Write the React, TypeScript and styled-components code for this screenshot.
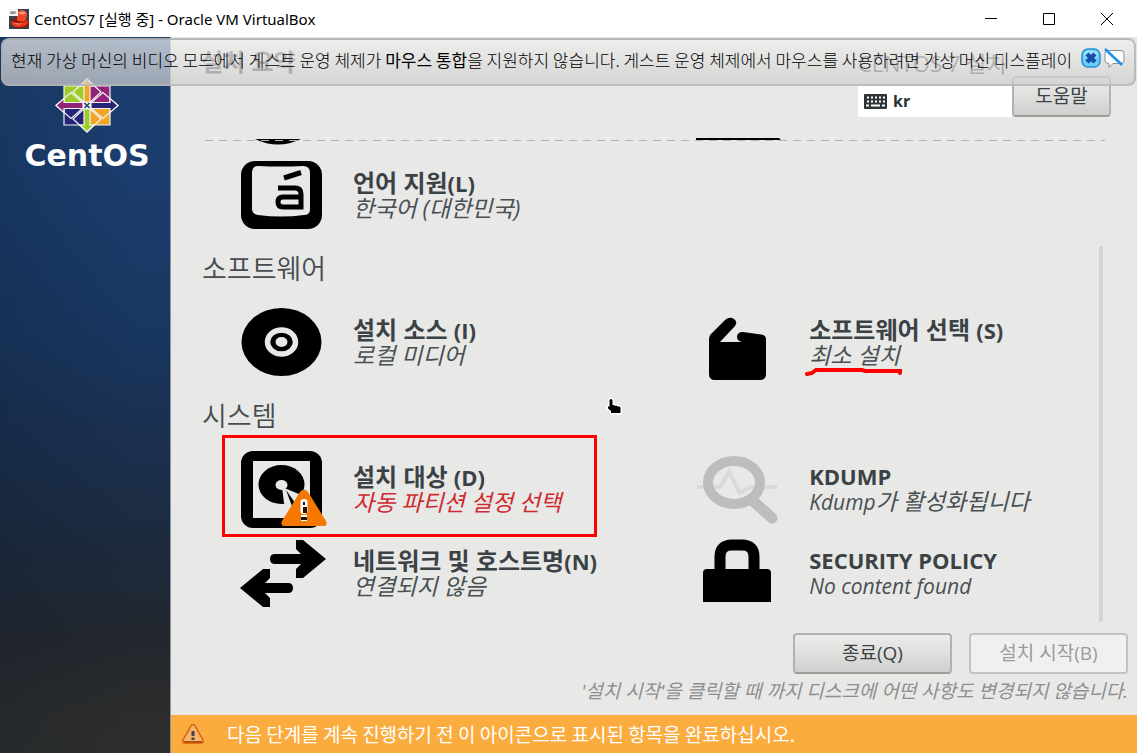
import React from "react";
import styled, { createGlobalStyle } from "styled-components";

const sans = `"Open Sans", "Noto Sans CJK KR", sans-serif`;
const ink = "#3b4245";

const GlobalStyle = createGlobalStyle`
  * { box-sizing: border-box; }
  body { margin: 0; font-family: ${sans}; background: #e8e8e6; color: ${ink}; }
  button { font: inherit; color: inherit; padding: 0; margin: 0; }
  svg { display: block; flex: none; }
`;

const Window = styled.div`
  display: flex;
  flex-direction: column;
  min-height: 100vh;
`;

const TitleBar = styled.header`
  display: flex;
  align-items: center;
  height: 37px;
  padding: 0 1px 0 9px;
  background: #fff;
  color: #000;
`;

const WindowTitle = styled.h1`
  flex: 1;
  margin: 0 0 0 5px;
  font-family: "Noto Sans", "Noto Sans CJK KR", sans-serif;
  font-size: 15px;
  font-weight: 400;
  line-height: 24px;
  white-space: nowrap;
`;

const WindowButton = styled.button`
  display: grid;
  place-items: center;
  width: 58px;
  height: 36px;
  border: 0;
  background: none;
`;

const Screen = styled.div`
  position: relative;
  flex: 1;
  display: grid;
  grid-template-columns: 171px minmax(0, 1fr);
`;

const Message = styled.div`
  position: absolute;
  z-index: 2;
  top: 1px;
  left: 1px;
  right: 1px;
  display: flex;
  align-items: flex-start;
  height: 48px;
  padding: 6px 9px 0 8px;
  border: 2px solid rgba(172, 172, 172, 0.75);
  border-radius: 8px;
  background: linear-gradient(rgba(238, 238, 238, 0.72), rgba(206, 206, 206, 0.72));
`;

const MessageText = styled.p`
  flex: 1;
  margin: 0;
  overflow: hidden;
  color: #000;
  font-family: "Noto Sans CJK KR", sans-serif;
  font-size: 17px;
  font-weight: 300;
  line-height: 28px;
  white-space: nowrap;
`;

const MessageActions = styled.div`
  display: flex;
  gap: 3px;
  padding-top: 2px;
`;

const IconButton = styled.button`
  border: 0;
  background: none;
`;

const Sidebar = styled.aside`
  display: flex;
  flex-direction: column;
  align-items: center;
  padding: 41px 0 0 4px;
  border-right: 1px solid #8a96a8;
  background:
    linear-gradient(90deg, rgba(10, 22, 40, 0.18), rgba(10, 22, 40, 0) 80%),
    linear-gradient(#1c3f70 0%, #1b3d6e 18%, #19365f 42%, #1b2f4f 56%, #1d2a3c 72%, #23272e 84%, #2b2c2c 94%, #2d2e2d 100%);
`;

const BrandName = styled.div`
  margin-top: 4px;
  color: #fff;
  font-family: "DejaVu Sans", sans-serif;
  font-size: 30px;
  font-weight: 700;
  line-height: 38px;
`;

const Main = styled.main`
  position: relative;
  display: flex;
  flex-direction: column;
  background: #e8e8e6;
`;

const HubHeader = styled.div`
  display: flex;
  justify-content: space-between;
  padding: 13px 26px 21px 30px;
`;

const HubTitle = styled.h2`
  margin: 0;
  font-size: 24px;
  font-weight: 700;
  line-height: 24px;
`;

const ProductName = styled.div`
  height: 26px;
  font-size: 22px;
  line-height: 26px;
`;

const HeaderTools = styled.div`
  display: flex;
  align-items: flex-end;
`;

const KeyboardLayout = styled.button`
  display: flex;
  align-items: center;
  gap: 6px;
  width: 154px;
  height: 32px;
  padding-left: 6px;
  border: 0;
  background: #fff;
  color: #2a2f31;
  font-size: 16px;
  font-weight: 700;
`;

const PushButton = styled.button<{ $width: number }>`
  width: ${(p) => p.$width}px;
  height: 41px;
  padding-bottom: 2px;
  border: 2px solid #b2b2b0;
  border-bottom-color: #9c9c99;
  border-radius: 4px;
  background: linear-gradient(#ececeb, #e0e0df 45%, #cfcfcd);
  font-size: 19px;
  line-height: 24px;

  &:disabled {
    border-color: #c3c3c1;
    background: #f0f0f0;
    color: #989c9d;
  }
`;

const SpokeArea = styled.div`
  position: relative;
  padding-left: 31px;
`;

const Dashes = styled.div`
  position: absolute;
  top: 2px;
  left: 34px;
  right: 32px;
  height: 1px;
  background: repeating-linear-gradient(90deg, #b4b4b2 0 8px, transparent 8px 14px);
`;

const SpokeGrid = styled.div`
  display: grid;
  grid-template-columns: minmax(0, 1.035fr) minmax(0, 1fr);
  padding-left: 38px;
`;

const CutOff = styled.div`
  height: 15px;
`;

const Category = styled.h3`
  margin: 0;
  color: #464d50;
  font-size: 27px;
  font-weight: 350;
  line-height: 63px;
  height: 63px;
`;

const Spoke = styled.button`
  position: relative;
  display: flex;
  align-items: center;
  gap: 25px;
  height: 84px;
  border: 0;
  background: none;
  text-align: left;
  white-space: nowrap;
`;

const Latin = styled.span``;

const SpokeTitle = styled.span`
  display: block;
  font-size: 24px;
  font-weight: 600;
  line-height: 25px;

  ${Latin} {
    font-size: 22px;
    font-weight: 700;
  }
`;

const SpokeStatus = styled.span<{ $error?: boolean }>`
  display: block;
  color: ${(p) => (p.$error ? "#d02a30" : "#495053")};
  font-size: 23px;
  font-style: italic;
  font-weight: 400;
  line-height: 25px;

  ${Latin} {
    font-size: 21px;
  }
`;

const Highlight = styled.span`
  position: absolute;
  top: -12px;
  left: -18px;
  width: 375px;
  height: 102px;
  border: 3px solid #fe0000;
`;

const Underline = styled.svg`
  position: absolute;
  top: 68px;
  left: 109px;
`;

const ScrollThumb = styled.div`
  position: absolute;
  top: 108px;
  right: 34px;
  bottom: -7px;
  width: 4px;
  border-radius: 2px;
  background: #d3d3d3;
`;

const Pointer = styled.svg`
  position: absolute;
  top: 360px;
  left: 435px;
`;

const Footer = styled.footer`
  display: flex;
  flex-direction: column;
  align-items: flex-end;
  margin-top: auto;
  padding: 18px 9px 10px;
`;

const Actions = styled.div`
  display: flex;
  gap: 17px;
`;

const Note = styled.p`
  margin: 3px 0 0;
  color: #8c8f90;
  font-size: 19px;
  font-style: italic;
  line-height: 28px;
`;

const Warning = styled.div`
  display: flex;
  align-items: center;
  gap: 22px;
  height: 38px;
  padding-left: 10px;
  background: #fbac3e;
  color: #fff;
  font-family: "Noto Sans CJK KR", sans-serif;
  font-size: 19px;
  line-height: 28px;
`;

const AppIcon = () => (
  <svg width="20" height="20" viewBox="0 0 20 20">
    <rect width="20" height="20" fill="#3a3f4c" />
    <ellipse cx="11" cy="14" rx="9" ry="5" fill="#a81200" />
    <path d="M2 12c3 3 12 3 17-1 1 4-3 7-9 7-5 0-8-2-8-6z" fill="#e63a1c" />
    <path d="M8 3c3-3 10-2 10 2l-1 6c-2 2-6 2-9 0z" fill="#f0482a" />
    <path d="M9 4c3-2 7-2 8 0-2 2-5 2-8 0z" fill="#ff9478" />
    <path d="M4 13c3 2 8 2 10 1-2 2-8 2-10-1z" fill="#ffb09a" />
    <rect width="9" height="7" fill="#f4f4f4" />
    <path d="M2 2v3M4 2v3M6 2v3M2 4h4" stroke="#777" />
  </svg>
);

const CentosMark = () => (
  <svg width="64" height="55" viewBox="0 0 64 55" stroke="#f3f3f3" strokeWidth="1.2">
    <path d="M9 8H31V26H9z" fill="#9ccd2a" />
    <path d="M33 8H55V26H33z" fill="#932279" />
    <path d="M9 29H31V47H9z" fill="#262577" />
    <path d="M33 29H55V47H33z" fill="#efa724" />
    <path d="M32 1l14 13-14 13-14-13zM32 28l14 13-14 13-14-13z" fill="none" />
    <path d="M1 27.500l15-13 15 13-15 13zM63 27.500l-15-13-15 13 15 13z" fill="none" />
    <path d="M32 1l7 7h-4v16h-6V8h-4z" fill="#efa724" />
    <path d="M32 54l7-7h-4V31h-6v16h-4z" fill="#9ccd2a" />
    <path d="M1 27.500l8-7v4h19v6H9v4z" fill="#932279" />
    <path d="M63 27.500l-8-7v4H36v6h19v4z" fill="#262577" />
    <path d="M28 24h8v7h-8z" fill="#f3f3f3" stroke="none" />
    <path d="M29.500 25l5 5M34.500 25l-5 5" stroke="#1c3f70" strokeWidth="1.500" />
  </svg>
);

const MessageCloseIcon = () => (
  <svg width="20" height="20" viewBox="0 0 20 20">
    <rect x="1" y="1" width="18" height="18" rx="6" fill="#6ccdf9" stroke="#2090d8" strokeWidth="1.500" />
    <rect x="3" y="2.500" width="14" height="8" rx="4" fill="#a8e8ff" opacity=".7" />
    <path d="M6 6l8 8M14 6l-8 8" stroke="#164fa8" strokeWidth="4.500" />
  </svg>
);

const MessageMuteIcon = () => (
  <svg width="21" height="20" viewBox="0 0 21 20">
    <path d="M4 2.500h13q3 0 3 3v7q0 3-3 3H9l-4 4v-4q-4 0-4-3v-7q0-3 3-3z" fill="#fdfdfd" stroke="#8d8d8d" />
    <path d="M1 1l17 16" stroke="#2090ea" strokeWidth="2.600" />
  </svg>
);

const KeyboardIcon = () => (
  <svg width="23" height="15" viewBox="0 0 23 15">
    <rect width="23" height="15" rx="1" fill="#2f3537" />
    <path d="M3 3.500h18M3 7.500h18" stroke="#fff" strokeWidth="2" strokeDasharray="2 2" />
    <path d="M2 11.500h3M7 11.500h9M18 11.500h3" stroke="#fff" strokeWidth="2" />
  </svg>
);

const LanguageIcon = () => (
  <svg width="88" height="84" viewBox="0 0 88 84">
    <rect x="1" y="8" width="81" height="68" rx="14" />
    <path d="M18 13Q41 14 63 13 70 13 70 20V56Q70 62 64 62 41 65 18 62 12 61 12 56V20Q12 13 18 13z" fill="#e8e8e6" />
    <path d="M44 25L61 19.500" stroke="#000" strokeWidth="5" />
    <path d="M38 35H55Q61 35 61 41V54H43Q38 54 38 49 38 44 43 44H61" fill="none" stroke="#000" strokeWidth="5" />
  </svg>
);

const DiscIcon = () => (
  <svg width="88" height="84" viewBox="0 0 88 84">
    <ellipse cx="41.500" cy="42" rx="40" ry="34" />
    <ellipse cx="41.500" cy="42" rx="14" ry="12" fill="none" stroke="#e8e8e6" strokeWidth="5.500" />
    <ellipse cx="41.500" cy="42" rx="6" ry="5" fill="#e8e8e6" />
  </svg>
);

const PackageIcon = () => (
  <svg width="88" height="84" viewBox="0 0 88 84">
    <path d="M13 43v31q0 6 6 6h45q6 0 6-6V39q0-4-5-4.500L47 32q-6 0-6 5 0 4 5 5H24L39 26q3-4-1-7-4-3-9 1L15 34q-2 2-2 5z" />
  </svg>
);

const DiskIcon = () => (
  <svg width="88" height="84" viewBox="0 0 88 84">
    <rect x="1" y="4" width="81" height="77" rx="12" />
    <path d="M13 14H70V71H13z" fill="#e8e8e6" />
    <ellipse cx="41.500" cy="37.500" rx="23" ry="19.500" />
    <ellipse cx="41.500" cy="38" rx="6" ry="5" fill="#e8e8e6" />
    <path d="M42 40l24 10-8 20-14-14z" fill="#e8e8e6" />
    <path d="M46 43l19 27h-9z" />
    <path d="M60 45Q64 40 68 45L86 74Q88 79 83 79H45Q40 79 42 74z" fill="#f57900" />
    <rect x="60.500" y="52" width="7" height="15" rx="3" fill="#fff" />
    <rect x="61" y="68" width="6" height="6" fill="#fff" />
    <path d="M63 55h2v3h-2zM63 60h4v6h-4zM61 70h6v3h-6z" fill="#181818" />
  </svg>
);

const NetworkIcon = () => (
  <svg width="88" height="84" viewBox="0 0 88 84">
    <path d="M56 9h7l23 19-23 19h-7V38l5-5H35q-5 0-5-5t5-5h26l-5-5z" />
    <path d="M30 38h-7L0 57l23 19h7V67l-5-5h23q5 0 5-5t-5-5H25l5-5z" />
  </svg>
);

const MagnifierIcon = () => (
  <svg width="88" height="84" viewBox="0 0 88 84">
    <path d="M1 40h23L33 25l11 21 10-6h27" fill="none" stroke="#d9d9d7" strokeWidth="4" />
    <ellipse cx="38" cy="35.500" rx="26" ry="21.500" fill="none" stroke="#bdbdbc" strokeWidth="10" />
    <path d="M56 53l20 18" stroke="#bdbdbc" strokeWidth="11" strokeLinecap="round" />
  </svg>
);

const LockIcon = () => (
  <svg width="88" height="84" viewBox="0 0 88 84">
    <path d="M7 71V42q0-4 4-4h60q4 0 4 4v29z" />
    <path d="M24 40V26q0-12 12-12h10q12 0 12 12v14" fill="none" stroke="#000" strokeWidth="11" />
  </svg>
);

const WarningIcon = () => (
  <svg width="24" height="20" viewBox="0 0 24 20">
    <path d="M10 2q2-3 4 0l8 14q1 3-2 3H4q-3 0-2-3z" fill="#f6b36c" stroke="#d9630a" strokeWidth="1.500" />
    <path d="M3 18h18" stroke="#b9500d" strokeWidth="2" />
    <path d="M12 7v5M12 13.500v2.500" stroke="#444" strokeWidth="3" />
  </svg>
);

export default function App() {
  return (
    <>
      <GlobalStyle />
      <Window>
        <TitleBar>
          <AppIcon />
          <WindowTitle>CentOS7 [실행 중] - Oracle VM VirtualBox</WindowTitle>
          <WindowButton aria-label="최소화">
            <svg width="12" height="12" stroke="#000"><path d="M0 5.500h12" /></svg>
          </WindowButton>
          <WindowButton aria-label="최대화">
            <svg width="12" height="12" stroke="#000" fill="none"><path d="M.5.500h11v11H.5z" /></svg>
          </WindowButton>
          <WindowButton aria-label="닫기">
            <svg width="12" height="12" stroke="#000"><path d="M0 0l12 12M12 0L0 12" /></svg>
          </WindowButton>
        </TitleBar>
        <Screen>
          <Message role="status">
            <MessageText>
              현재 가상 머신의 비디오 모드에서 게스트 운영 체제가 <b>마우스 통합</b>을 지원하지 않습니다. 게스트 운영 체제에서 마우스를 사용하려면 가상 머신 디스플레이
            </MessageText>
            <MessageActions>
              <IconButton aria-label="메시지 닫기"><MessageCloseIcon /></IconButton>
              <IconButton aria-label="다시 표시하지 않음"><MessageMuteIcon /></IconButton>
            </MessageActions>
          </Message>
          <Sidebar>
            <CentosMark />
            <BrandName>CentOS</BrandName>
          </Sidebar>
          <Main>
            <HubHeader>
              <HubTitle>설치 요약</HubTitle>
              <div>
                <ProductName>CENTOS 7 설치</ProductName>
                <HeaderTools>
                  <KeyboardLayout><KeyboardIcon />kr</KeyboardLayout>
                  <PushButton $width={99}>도움말</PushButton>
                </HeaderTools>
              </div>
            </HubHeader>
            <SpokeArea>
              <SpokeGrid>
                <CutOff>
                  <svg width="88" height="7"><path d="M15 1H61Q38 12 15 1z" /></svg>
                </CutOff>
                <CutOff>
                  <svg width="88" height="6"><path d="M0 0H83L85 2H-2z" /></svg>
                </CutOff>
                <Spoke>
                  <LanguageIcon />
                  <span>
                    <SpokeTitle>언어 지원<Latin>(L)</Latin></SpokeTitle>
                    <SpokeStatus>한국어 (대한민국)</SpokeStatus>
                  </span>
                </Spoke>
              </SpokeGrid>
              <Dashes />
              <Category>소프트웨어</Category>
              <SpokeGrid>
                <Spoke>
                  <DiscIcon />
                  <span>
                    <SpokeTitle>설치 소스 <Latin>(I)</Latin></SpokeTitle>
                    <SpokeStatus>로컬 미디어</SpokeStatus>
                  </span>
                </Spoke>
                <Spoke>
                  <PackageIcon />
                  <span>
                    <SpokeTitle>소프트웨어 선택 <Latin>(S)</Latin></SpokeTitle>
                    <SpokeStatus>최소 설치</SpokeStatus>
                  </span>
                  <Underline width="98" height="10" viewBox="0 0 98 10" fill="none" stroke="#fe0000" strokeWidth="4" strokeLinecap="round">
                    <path d="M2 6l5-1 4-3h46l3 1h35v2" />
                  </Underline>
                </Spoke>
              </SpokeGrid>
              <Category>시스템</Category>
              <SpokeGrid>
                <Spoke>
                  <DiskIcon />
                  <span>
                    <SpokeTitle>설치 대상 <Latin>(D)</Latin></SpokeTitle>
                    <SpokeStatus $error>자동 파티션 설정 선택</SpokeStatus>
                  </span>
                  <Highlight />
                </Spoke>
                <Spoke>
                  <MagnifierIcon />
                  <span>
                    <SpokeTitle><Latin>KDUMP</Latin></SpokeTitle>
                    <SpokeStatus><Latin>Kdump</Latin>가 활성화됩니다</SpokeStatus>
                  </span>
                </Spoke>
                <Spoke>
                  <NetworkIcon />
                  <span>
                    <SpokeTitle>네트워크 및 호스트명<Latin>(N)</Latin></SpokeTitle>
                    <SpokeStatus>연결되지 않음</SpokeStatus>
                  </span>
                </Spoke>
                <Spoke>
                  <LockIcon />
                  <span>
                    <SpokeTitle><Latin>SECURITY POLICY</Latin></SpokeTitle>
                    <SpokeStatus><Latin>No content found</Latin></SpokeStatus>
                  </span>
                </Spoke>
              </SpokeGrid>
              <ScrollThumb />
            </SpokeArea>
            <Footer>
              <Actions>
                <PushButton $width={159}>종료(Q)</PushButton>
                <PushButton $width={159} disabled>설치 시작(B)</PushButton>
              </Actions>
              <Note>'설치 시작'을 클릭할 때 까지 디스크에 어떤 사항도 변경되지 않습니다.</Note>
            </Footer>
            <Warning>
              <WarningIcon />
              다음 단계를 계속 진행하기 전 이 아이콘으로 표시된 항목을 완료하십시오.
            </Warning>
            <Pointer width="17" height="18" viewBox="0 0 17 18">
              <path d="M3.500 3.500q0-1.500 1.500-1.500t1.500 1.500V8h1.500l1 .7h2l1 .8h1.500l1 1V16H5v-2l-3-2.500V9.500h1.500z" stroke="#fff" strokeWidth="3" strokeLinejoin="round" />
              <path d="M3.500 3.500q0-1.500 1.500-1.500t1.500 1.500V8h1.500l1 .7h2l1 .8h1.500l1 1V16H5v-2l-3-2.500V9.500h1.500z" />
            </Pointer>
          </Main>
        </Screen>
      </Window>
    </>
  );
}
